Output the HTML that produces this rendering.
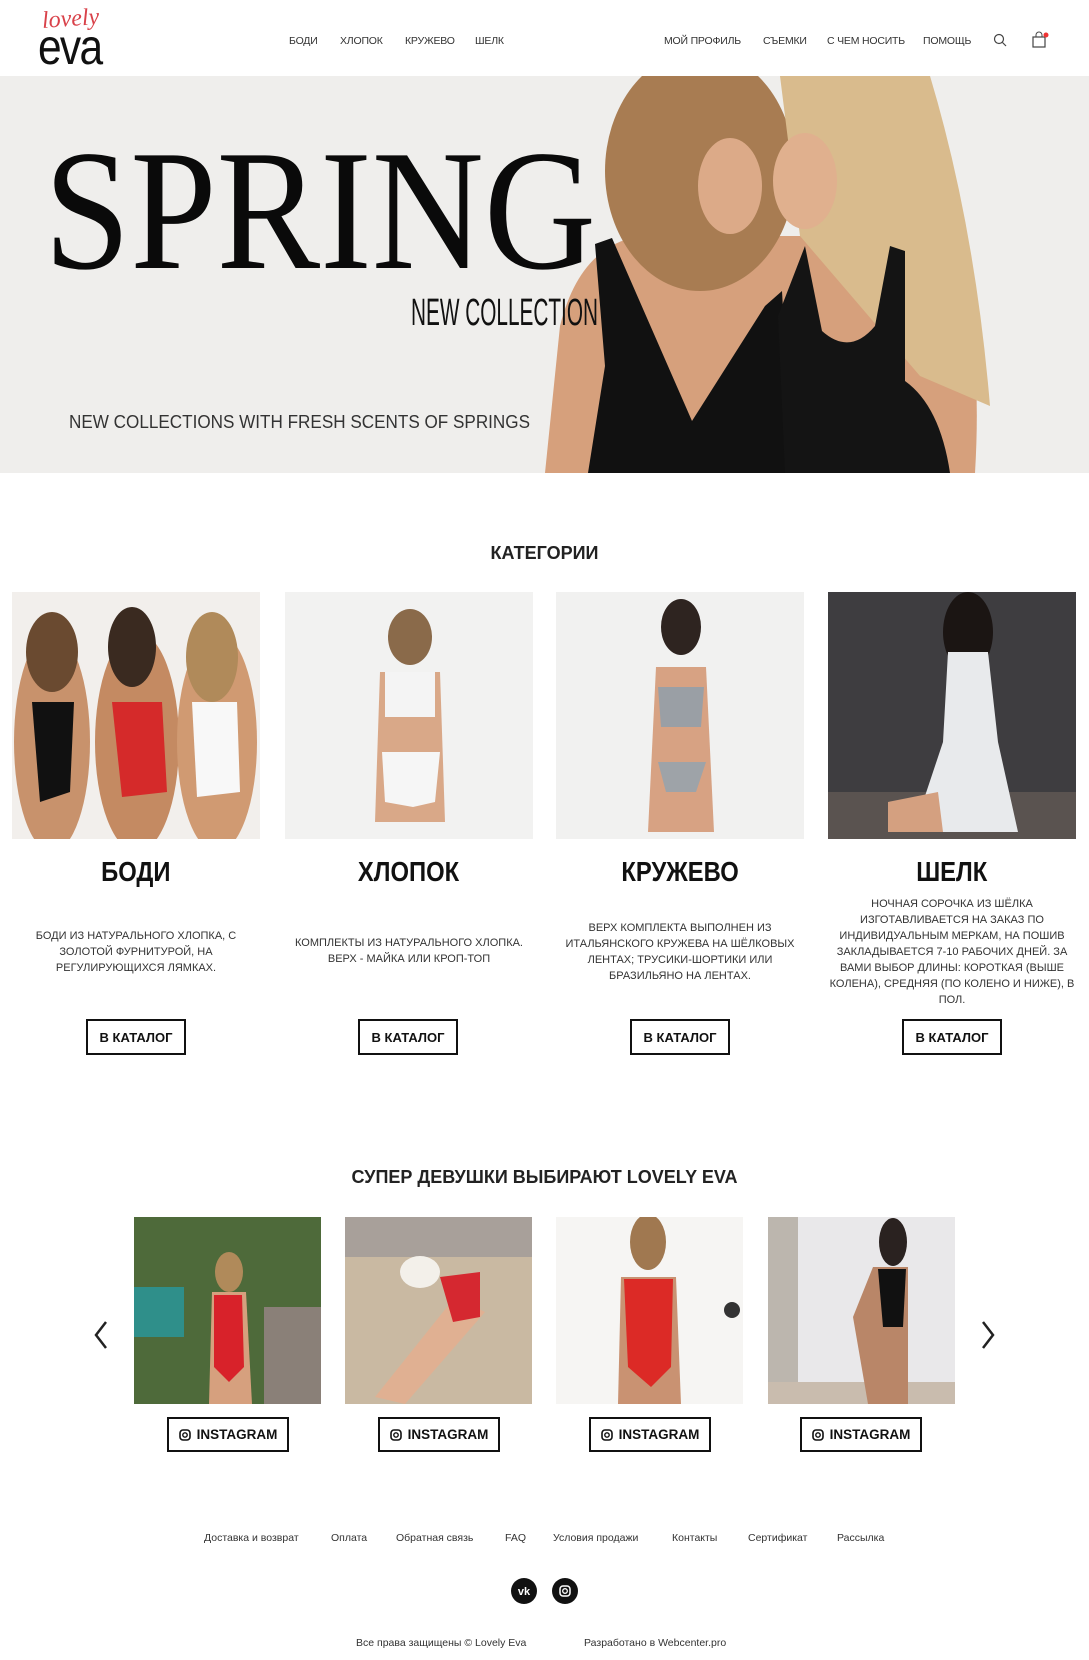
<!DOCTYPE html>
<html><head><meta charset="utf-8">
<style>
*{margin:0;padding:0;box-sizing:border-box}
body{width:1089px;height:1660px;background:#fff;font-family:"Liberation Sans",sans-serif;color:#111;position:relative;overflow:hidden}
.a{position:absolute}
.nav{font-size:10.5px;color:#333;top:35px;letter-spacing:-.2px}
.cond{display:inline-block;transform:scaleX(.85);transform-origin:center}
.ct{font-weight:bold;font-size:28px;text-align:center;width:248px;top:856px}
.cd{font-size:11px;color:#333;text-align:center;line-height:16px;width:248px}
.btn{border:2px solid #111;height:36px;width:100px;font-weight:bold;font-size:13px;display:flex;align-items:center;justify-content:center;top:1019px}
.ib{border:2px solid #111;height:35px;width:122px;font-weight:bold;font-size:13.5px;display:flex;align-items:center;justify-content:center;top:1417px;gap:6px}
.fl{font-size:10.5px;color:#333;top:1532px}
</style></head><body>
<div class="a" style="left:42px;top:6px;font-family:'Liberation Serif',serif;font-style:italic;color:#d9424a;font-size:24px;transform:rotate(-4deg)">lovely</div>
<div class="a" style="left:38px;top:18px;font-size:50px;letter-spacing:-2px;transform:scaleX(.85);transform-origin:left">eva</div>
<div class="a nav" style="left:289px">БОДИ</div>
<div class="a nav" style="left:340px">ХЛОПОК</div>
<div class="a nav" style="left:405px">КРУЖЕВО</div>
<div class="a nav" style="left:475px">ШЕЛК</div>
<div class="a nav" style="left:664px">МОЙ ПРОФИЛЬ</div>
<div class="a nav" style="left:763px">СЪЕМКИ</div>
<div class="a nav" style="left:827px">С ЧЕМ НОСИТЬ</div>
<div class="a nav" style="left:923px">ПОМОЩЬ</div>
<svg class="a" style="left:993px;top:33px" width="14" height="14"><circle cx="6" cy="6" r="4.5" fill="none" stroke="#444" stroke-width="1.2"/><path d="M9.5 9.5L13 13" stroke="#444" stroke-width="1.2"/></svg>
<svg class="a" style="left:1031px;top:31px" width="18" height="18"><rect x="2" y="6" width="12" height="10" fill="none" stroke="#444" stroke-width="1.2"/><path d="M5 6V4a3 3 0 0 1 6 0v2" fill="none" stroke="#444"/><circle cx="15" cy="4" r="2.5" fill="#e33"/></svg>
<svg class="a" style="left:0;top:76px" width="1089" height="397">
<rect width="1089" height="397" fill="#efeeec"/>
<path d="M545 397 L560 250 Q580 170 640 160 L940 160 Q985 230 975 397Z" fill="#d6a07c"/>
<ellipse cx="700" cy="95" rx="95" ry="120" fill="#a87c52"/>
<path d="M780 0 L930 0 Q975 150 990 330 L920 300 L800 160Z" fill="#d9bb8d"/>
<ellipse cx="730" cy="110" rx="32" ry="48" fill="#dcaa88"/>
<ellipse cx="805" cy="105" rx="32" ry="48" fill="#e0b08e"/>
<path d="M595 168 L612 162 L692 345 L765 230 L782 215 L792 397 L588 397 L605 290Z" fill="#111"/>
<path d="M778 240 L805 170 L822 255 Q850 280 875 250 L890 170 L905 175 L905 305 Q940 330 950 397 L785 397Z" fill="#141414"/>
<text x="44" y="192" font-family="Liberation Serif,serif" font-size="172" fill="#0a0a0a" textLength="552" lengthAdjust="spacingAndGlyphs">SPRING</text>
<text x="411" y="249" font-family="Liberation Sans,sans-serif" font-size="38" fill="#111" textLength="187" lengthAdjust="spacingAndGlyphs">NEW COLLECTION</text>
<text x="69" y="352" font-family="Liberation Sans,sans-serif" font-size="18" fill="#333" textLength="461" lengthAdjust="spacingAndGlyphs">NEW COLLECTIONS WITH FRESH SCENTS OF SPRINGS</text>
</svg>
<div class="a" style="left:0;width:1089px;text-align:center;top:543px;font-weight:bold;font-size:18px;color:#222">КАТЕГОРИИ</div>
<svg class="a" style="left:12px;top:592px" width="248" height="247"><rect width="248" height="247" fill="#f2efec"/><ellipse cx="40" cy="150" rx="38" ry="110" fill="#c8926c"/><ellipse cx="125" cy="150" rx="42" ry="110" fill="#c48a62"/><ellipse cx="205" cy="150" rx="40" ry="110" fill="#d09a72"/><ellipse cx="40" cy="60" rx="26" ry="40" fill="#6a4a30"/><ellipse cx="120" cy="55" rx="24" ry="40" fill="#3a2a20"/><ellipse cx="200" cy="65" rx="26" ry="45" fill="#b08a5a"/><path d="M20 110L62 110L58 200L28 210Z" fill="#111"/><path d="M100 110L150 110L155 200L110 205Z" fill="#d52a2a"/><path d="M180 110L225 110L228 200L185 205Z" fill="#f8f8f8"/></svg>
<svg class="a" style="left:285px;top:592px" width="248" height="247"><rect width="248" height="247" fill="#f2f2f1"/><ellipse cx="125" cy="45" rx="22" ry="28" fill="#8a6a4a"/><path d="M95 80L155 80L160 230L90 230Z" fill="#d9a888"/><path d="M100 80L150 80L150 125L100 125Z" fill="#f4f4f4"/><path d="M97 160L155 160L150 210L128 215L100 210Z" fill="#f6f6f6"/></svg>
<svg class="a" style="left:556px;top:592px" width="248" height="247"><rect width="248" height="247" fill="#f1f1f0"/><ellipse cx="125" cy="35" rx="20" ry="28" fill="#2e2420"/><path d="M100 75L150 75L158 240L92 240Z" fill="#d7a283"/><path d="M102 95L148 95L145 135L105 135Z" fill="#9a9fa5"/><path d="M102 170L150 170L140 200L110 200Z" fill="#9ea3a8"/></svg>
<svg class="a" style="left:828px;top:592px" width="248" height="247"><rect width="248" height="247" fill="#3e3d40"/><rect y="200" width="248" height="47" fill="#5a5350"/><ellipse cx="140" cy="40" rx="25" ry="40" fill="#1b1513"/><path d="M120 60L160 60L170 150L190 240L85 240L115 150Z" fill="#e8eaec"/><path d="M60 210L110 200L115 240L60 240Z" fill="#d4a080"/></svg>
<div class="a ct" style="left:12px"><span class="cond">БОДИ</span></div>
<div class="a ct" style="left:285px"><span class="cond">ХЛОПОК</span></div>
<div class="a ct" style="left:556px"><span class="cond">КРУЖЕВО</span></div>
<div class="a ct" style="left:828px"><span class="cond">ШЕЛК</span></div>
<div class="a cd" style="left:12px;top:928px">БОДИ ИЗ НАТУРАЛЬНОГО ХЛОПКА, С ЗОЛОТОЙ ФУРНИТУРОЙ, НА РЕГУЛИРУЮЩИХСЯ ЛЯМКАХ.</div>
<div class="a cd" style="left:285px;top:935px">КОМПЛЕКТЫ ИЗ НАТУРАЛЬНОГО ХЛОПКА. ВЕРХ - МАЙКА ИЛИ КРОП-ТОП</div>
<div class="a cd" style="left:556px;top:920px">ВЕРХ КОМПЛЕКТА ВЫПОЛНЕН ИЗ ИТАЛЬЯНСКОГО КРУЖЕВА НА ШЁЛКОВЫХ ЛЕНТАХ; ТРУСИКИ-ШОРТИКИ ИЛИ БРАЗИЛЬЯНО НА ЛЕНТАХ.</div>
<div class="a cd" style="left:828px;top:896px">НОЧНАЯ СОРОЧКА ИЗ ШЁЛКА ИЗГОТАВЛИВАЕТСЯ НА ЗАКАЗ ПО ИНДИВИДУАЛЬНЫМ МЕРКАМ, НА ПОШИВ ЗАКЛАДЫВАЕТСЯ 7-10 РАБОЧИХ ДНЕЙ. ЗА ВАМИ ВЫБОР ДЛИНЫ: КОРОТКАЯ (ВЫШЕ КОЛЕНА), СРЕДНЯЯ (ПО КОЛЕНО И НИЖЕ), В ПОЛ.</div>
<div class="a btn" style="left:86px">В КАТАЛОГ</div>
<div class="a btn" style="left:358px">В КАТАЛОГ</div>
<div class="a btn" style="left:630px">В КАТАЛОГ</div>
<div class="a btn" style="left:902px">В КАТАЛОГ</div>
<div class="a" style="left:0;width:1089px;text-align:center;top:1167px;font-weight:bold;font-size:18px;color:#222">СУПЕР ДЕВУШКИ ВЫБИРАЮТ LOVELY EVA</div>
<svg class="a" style="left:93px;top:1320px" width="16" height="30"><path d="M13 2L3 15L13 28" fill="none" stroke="#222" stroke-width="2.5"/></svg>
<svg class="a" style="left:980px;top:1320px" width="16" height="30"><path d="M3 2L13 15L3 28" fill="none" stroke="#222" stroke-width="2.5"/></svg>
<svg class="a" style="left:134px;top:1217px" width="187" height="187"><rect width="187" height="187" fill="#4e6a3a"/><rect x="0" y="70" width="50" height="50" fill="#2f8f8a"/><rect x="130" y="90" width="57" height="97" fill="#8a8078"/><ellipse cx="95" cy="55" rx="14" ry="20" fill="#b08a5a"/><path d="M78 75L112 75L118 187L75 187Z" fill="#d6a07e"/><path d="M80 78L108 78L110 150L95 165L80 150Z" fill="#d8222a"/></svg>
<svg class="a" style="left:345px;top:1217px" width="187" height="187"><rect width="187" height="187" fill="#c9b9a2"/><rect width="187" height="40" fill="#a8a09a"/><ellipse cx="75" cy="55" rx="20" ry="16" fill="#f3f0ea"/><path d="M30 180L110 80L140 95L60 187Z" fill="#e0b092"/><path d="M95 60L135 55L135 100L108 105Z" fill="#d52830"/></svg>
<svg class="a" style="left:556px;top:1217px" width="187" height="187"><rect width="187" height="187" fill="#f6f5f3"/><ellipse cx="92" cy="25" rx="18" ry="28" fill="#a07850"/><path d="M65 60L120 60L125 187L62 187Z" fill="#c99272"/><path d="M68 62L117 62L115 150L95 170L72 150Z" fill="#dc2a26"/><circle cx="176" cy="93" r="8" fill="#333"/></svg>
<svg class="a" style="left:768px;top:1217px" width="187" height="187"><rect width="187" height="187" fill="#e9e8ea"/><rect x="0" y="0" width="30" height="187" fill="#bcb6ae"/><rect y="165" width="187" height="22" fill="#c9bcae"/><ellipse cx="125" cy="25" rx="14" ry="24" fill="#2a2220"/><path d="M105 50L140 50L140 187L100 187L85 100Z" fill="#b98668"/><path d="M110 52L138 52L135 110L115 110Z" fill="#111"/></svg>
<div class="a ib" style="left:167px"><svg width="12" height="12"><rect x="1" y="1" width="10" height="10" rx="3" fill="none" stroke="#111" stroke-width="1.6"/><circle cx="6" cy="6" r="2.2" fill="none" stroke="#111" stroke-width="1.4"/></svg>INSTAGRAM</div>
<div class="a ib" style="left:378px"><svg width="12" height="12"><rect x="1" y="1" width="10" height="10" rx="3" fill="none" stroke="#111" stroke-width="1.6"/><circle cx="6" cy="6" r="2.2" fill="none" stroke="#111" stroke-width="1.4"/></svg>INSTAGRAM</div>
<div class="a ib" style="left:589px"><svg width="12" height="12"><rect x="1" y="1" width="10" height="10" rx="3" fill="none" stroke="#111" stroke-width="1.6"/><circle cx="6" cy="6" r="2.2" fill="none" stroke="#111" stroke-width="1.4"/></svg>INSTAGRAM</div>
<div class="a ib" style="left:800px"><svg width="12" height="12"><rect x="1" y="1" width="10" height="10" rx="3" fill="none" stroke="#111" stroke-width="1.6"/><circle cx="6" cy="6" r="2.2" fill="none" stroke="#111" stroke-width="1.4"/></svg>INSTAGRAM</div>
<div class="a fl" style="left:204px">Доставка и возврат</div>
<div class="a fl" style="left:331px">Оплата</div>
<div class="a fl" style="left:396px">Обратная связь</div>
<div class="a fl" style="left:505px">FAQ</div>
<div class="a fl" style="left:553px">Условия продажи</div>
<div class="a fl" style="left:672px">Контакты</div>
<div class="a fl" style="left:748px">Сертификат</div>
<div class="a fl" style="left:837px">Рассылка</div>
<svg class="a" style="left:511px;top:1578px" width="26" height="26"><circle cx="13" cy="13" r="13" fill="#111"/><text x="13" y="17" text-anchor="middle" font-size="11" font-weight="bold" fill="#fff" font-family="Liberation Sans">vk</text></svg>
<svg class="a" style="left:552px;top:1578px" width="26" height="26"><circle cx="13" cy="13" r="13" fill="#111"/><rect x="8" y="8" width="10" height="10" rx="3" fill="none" stroke="#fff" stroke-width="1.5"/><circle cx="13" cy="13" r="2.3" fill="none" stroke="#fff" stroke-width="1.3"/></svg>
<div class="a fl" style="left:356px;top:1637px">Все права защищены © Lovely Eva</div>
<div class="a fl" style="left:584px;top:1637px">Разработано в Webcenter.pro</div>
</body></html>
